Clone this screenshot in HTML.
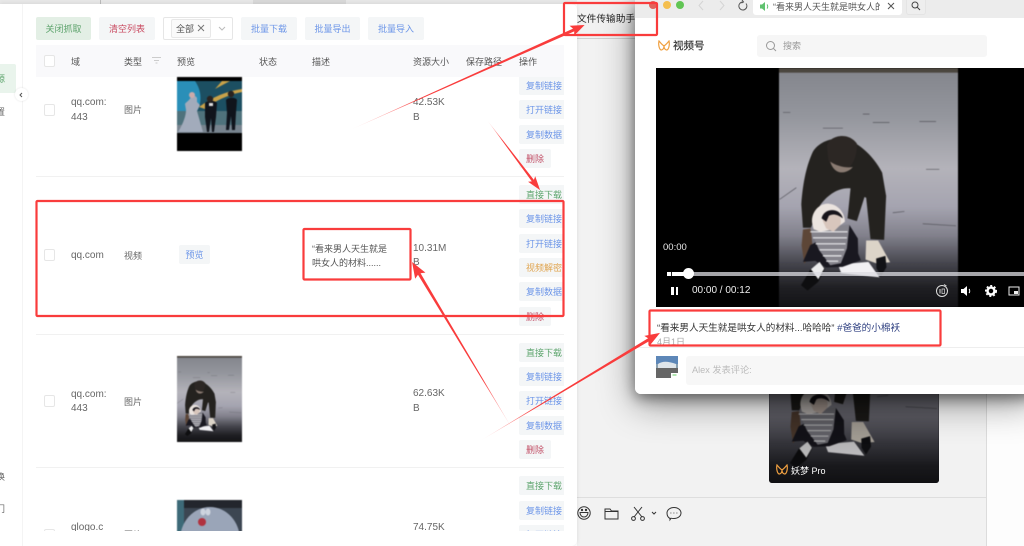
<!DOCTYPE html>
<html lang="zh"><head><meta charset="utf-8"><title>Screenshot</title>
<style>
*{box-sizing:border-box}
html,body{margin:0;padding:0;width:1024px;height:546px;overflow:hidden;background:#fff}
body{font-family:"Liberation Sans","Noto Sans CJK SC",sans-serif;font-size:9px;color:#666}
#root{position:relative;width:1024px;height:546px;overflow:hidden;filter:blur(.3px)}
.a{position:absolute}
.x{position:absolute;line-height:14px;white-space:nowrap;margin-top:1px}
.n{font-size:10px;color:#666}
.h{color:#555}
.tb{position:absolute;top:17px;height:23px;line-height:25px;text-align:center;border-radius:2px;background:#f4f6f7;color:#6d96e8;white-space:nowrap}
.b{position:absolute;left:519px;width:52px;height:19px;line-height:21px;padding-left:7px;background:#f4f6f7;border-radius:2px;white-space:nowrap;color:#6d96e8}
.g{color:#5ea56e}.r{color:#c25168;width:32px}.o{color:#e0a44e}
.c{position:absolute;left:44px;width:11px;height:12px;border:1px solid #e6e6e6;border-radius:2px;background:#fff}
.l{position:absolute;left:36px;width:528px;height:1px;background:#f1f1f1}
svg{display:block}
</style></head><body><div id="root">

<svg width="0" height="0" style="position:absolute">
<defs>
<linearGradient id="ice" x1="0" y1="0" x2="0" y2="1">
<stop offset="0" stop-color="#83858c"/><stop offset=".2" stop-color="#94969d"/><stop offset=".42" stop-color="#b4b3ba"/><stop offset=".58" stop-color="#a5a4b0"/><stop offset=".7" stop-color="#82818c"/><stop offset=".82" stop-color="#44444c"/><stop offset=".92" stop-color="#1f1f23"/><stop offset="1" stop-color="#131316"/>
</linearGradient>
<linearGradient id="fade" x1="0" y1="0" x2="1" y2="0">
<stop offset="0" stop-color="#f93c3c" stop-opacity="0"/><stop offset=".3" stop-color="#f93c3c"/><stop offset="1" stop-color="#f93c3c"/>
</linearGradient>
<symbol id="scene" viewBox="28 12 538 715" preserveAspectRatio="none">
<rect x="28" y="12" width="538" height="715" fill="url(#ice)"/>
<rect x="28" y="12" width="538" height="14" fill="#4b463f"/>
<path d="M40 145h22M280 150h20M310 175h50M450 172h50M160 192h60M370 445l35-4M460 478l100 6M470 315h40M30 405l50-35" stroke="#55555c" stroke-width="2" fill="none"/>
<path d="M95 420C100 350 112 300 130 262 145 238 175 222 215 222 260 228 310 270 338 325L350 395 344 526 303 524 290 400 285 398 262 470 234 462 243 372C205 368 170 395 150 425L124 490 100 490Z" fill="#24221f"/>
<path d="M172 245C178 215 235 200 262 238 264 275 248 310 225 320 200 322 182 305 176 285Z" fill="#2c2724"/>
<path d="M182 292C200 305 230 312 250 308 240 320 225 326 210 324 195 320 186 306 182 292Z" fill="#8a7b72"/>
<path d="M100 495l24-3 6 70-26 36-8-55Z" fill="#5d4637"/>
<path d="M290 528l36 0 36 65-40 4-34-12Z" fill="#dcd4c8"/>
<path d="M320 582l28-8 3 34-16 26-14-22Z" fill="#121216"/>
<path d="M205 600l92-8 33 46-115-12Z" fill="#f1f0f3"/>
<path d="M100 592l22-50 118-60 25 40 1 45 8 20-55 20-50 2-32-20Z" fill="#191820"/>
<path d="M122 494l118-14-8 72-18 44-32 6-34-46Z" fill="#85848c"/>
<path d="M122 502h112M130 520h102M138 538h90M150 556h74M160 574h56M170 590h36" stroke="#ececee" stroke-width="3.500" fill="none"/>
<path d="M128 478c-6-30 18-62 50-60 28 2 48 28 48 54l-30 22-44 8-20-8Z" fill="#ebe4df"/>
<path d="M160 470c0-24 14-34 30-30 20 4 28 24 22 42l-20 20-22-10Z" fill="#d8c6bc"/>
<path d="M156 462c6-32 56-34 64 0-18-14-32-14-42-8l-8 18Z" fill="#17141a"/>
<path d="M94 662l28-46 30-22 14 18-20 40-32 26Z" fill="#0e0e10"/>
<path d="M124 614l26-22 14 20-18 32Z" fill="#ececed"/>
</symbol>
<symbol id="logo" viewBox="0 0 12 11"><path d="M1 1C3 3.500 4.500 5 6 6 7.500 5 9 3.500 11 1 11.800 4 11 9 9 10 7 10.300 6 8 6 6 6 8 5 10.300 3 10 1 9 .2 4 1 1Z" fill="none" stroke="#f0a040" stroke-width="1.200"/></symbol>
</defs>
</svg>

<!-- background strip -->
<div class="a" style="left:0;top:0;width:1024px;height:4px;background:#e7e7e7"></div>
<div class="a" style="left:100px;top:0;width:1px;height:4px;background:#bbb"></div>
<div class="a" style="left:253px;top:0;width:93px;height:4px;background:#d8d8d8"></div>

<!-- right background / chat window -->
<div class="a" style="left:986px;top:0;width:38px;height:546px;background:#fdfdfd"></div>
<div class="a" style="left:577px;top:0;width:410px;height:546px;background:#f2f2f2;border-right:1px solid #dcdcdc"></div>
<div class="a" style="left:570px;top:38px;width:100px;height:1px;background:#d0d0d0"></div>
<div class="a" style="left:577px;top:497px;width:409px;height:1px;background:#dedede"></div>
<div class="x" style="left:577px;top:12px;font-size:9.700px;color:#222">文件传输助手</div>

<!-- thumbnail in chat -->
<div class="a" style="left:769px;top:380px;width:170px;height:103px;background:#17171a;border-radius:3px;overflow:hidden">
<svg class="a" style="left:0;top:-116px;filter:blur(.5px)" width="170" height="219"><use href="#scene" width="170" height="219"/></svg>
<div class="a" style="left:0;top:0;width:170px;height:103px;background:linear-gradient(rgba(0,0,0,.42),rgba(0,0,0,.15))"></div>
<svg class="a" style="left:7px;top:84px" width="12" height="11"><use href="#logo" width="12" height="11"/></svg>
<div class="x" style="left:22px;top:83px;color:#fff;font-size:9px">妖梦 Pro</div>
</div>

<!-- chat toolbar -->
<svg class="a" style="left:577px;top:503px" width="110" height="20" fill="none" stroke="#333" stroke-width="1">
<circle cx="7" cy="10" r="6.200"/><path d="M3 9.500h8c0 3-2 4.500-4 4.500S3 12.500 3 9.500Z"/><circle cx="5" cy="7" r=".7" fill="#333"/><circle cx="9" cy="7" r=".7" fill="#333"/>
<path d="M28 6h5l1.500 2H41v8H28ZM28 8.500h13"/>
<path d="M57 4l8 10M65 4l-8 10"/><circle cx="56.500" cy="15.500" r="1.900"/><circle cx="65.500" cy="15.500" r="1.900"/>
<path d="M75 9l2 2 2-2"/>
<path d="M93 15.500c-2-1-3-3-3-5.500 0-3 3-5.500 7-5.500s7 2.500 7 5.500-3 5.500-7 5.500c-1 0-2 0-3-.3l-1 1.500Z"/><path d="M93.500 10h.8M96.500 10h.8M99.500 10h.8"/>
</svg>

<!-- left panel -->
<div class="a" style="left:0;top:4px;width:577px;height:542px;background:#fff;border-radius:0 6px 6px 0;box-shadow:0 0 4px rgba(0,0,0,.1)"></div>
<div class="a" style="left:22px;top:4px;width:1px;height:542px;background:#f4f4f4"></div>
<div class="a" style="left:0;top:64px;width:16px;height:29px;background:#e9f4ec;border-radius:0 2px 2px 0"></div>
<div class="x" style="left:-4px;top:71px;color:#5ea56e">源</div>
<div class="x" style="left:-4px;top:104px;color:#666">置</div>
<div class="x" style="left:-4px;top:469px;color:#666">换</div>
<div class="x" style="left:-4px;top:501px;color:#666">门</div>
<div class="a" style="left:15px;top:88px;width:13px;height:13px;border-radius:50%;background:#fff;box-shadow:0 0 2px rgba(0,0,0,.12)"></div>
<svg class="a" style="left:18px;top:92px" width="6" height="6" fill="none" stroke="#555"><path d="M4 1L2 3l2 2"/></svg>

<div class="a" style="left:0;top:0;width:564px;height:531px;overflow:hidden">
<!-- row 1 buttons sit beneath the sticky header -->
<div class="b" style="top:76px">复制链接</div>
<div class="b" style="top:100px">打开链接</div>
<div class="b" style="top:125px">复制数据</div>
<div class="b r" style="top:149px">删除</div>

<!-- toolbar -->
<div class="tb" style="left:36px;width:55px;background:#e3efe5;color:#5da36c">关闭抓取</div>
<div class="tb" style="left:99px;width:56px;color:#c9485f">清空列表</div>
<div class="a" style="left:163px;top:17px;width:70px;height:23px;border:1px solid #e6e6e6;border-radius:2px"></div>
<div class="a" style="left:171px;top:19px;width:40px;height:19px;border:1px solid #e8e8e8;border-radius:2px;background:#fafafa;line-height:19px;padding-left:4px;color:#555">全部</div>
<svg class="a" style="left:197px;top:24px" width="8" height="8" stroke="#777" fill="none"><path d="M1 1l6 6M7 1L1 7"/></svg>
<svg class="a" style="left:218px;top:26px" width="8" height="5" stroke="#bbb" fill="none"><path d="M1 1l3 3 3-3"/></svg>
<div class="tb" style="left:241px;width:56px">批量下载</div>
<div class="tb" style="left:305px;width:55px">批量导出</div>
<div class="tb" style="left:368px;width:56px">批量导入</div>

<!-- header -->
<div class="a" style="left:36px;top:45px;width:528px;height:32px;background:#f9f9fb"></div>
<div class="c" style="top:55px"></div>
<div class="x h" style="left:71px;top:54px">域</div>
<div class="x h" style="left:124px;top:54px">类型</div>
<svg class="a" style="left:152px;top:57px" width="9" height="7" fill="none" stroke="#ccc"><path d="M0 .5h9M2 3.500h5M3.500 6h2"/></svg>
<div class="x h" style="left:177px;top:54px">预览</div>
<div class="x h" style="left:259px;top:54px">状态</div>
<div class="x h" style="left:312px;top:54px">描述</div>
<div class="x h" style="left:413px;top:54px">资源大小</div>
<div class="x h" style="left:466px;top:54px">保存路径</div>
<div class="x h" style="left:519px;top:54px">操作</div>

<!-- row 1 -->
<div class="c" style="top:104px"></div>
<div class="x n" style="left:71px;top:95px">qq.com:</div><div class="x n" style="left:71px;top:110px">443</div>
<div class="x" style="left:124px;top:102px">图片</div>
<svg class="a" style="left:177px;top:77px;filter:blur(.4px)" width="65" height="74" viewBox="0 0 65 74">
<rect width="65" height="74" fill="#000"/>
<rect y="4" width="65" height="36" fill="#2a8fb8"/>
<path d="M18 4c7 10 7 22 2 30H65V4Z" fill="#1c4f62"/>
<path d="M22 30C35 20 50 14 65 12v3C50 18 38 24 28 32ZM38 12l15-8h-8Z" fill="#c8a24a"/>
<rect y="34" width="65" height="22" fill="#4f727c"/>
<rect y="48" width="65" height="8" fill="#77838e"/>
<path d="M14 20c3-2 5-1 6 1l0 4 3 3-3 6 6 21H1c5-8 8-16 8-22l-1-6c1-2 4-3 6-7Z" fill="#a2abbb"/>
<circle cx="15" cy="18" r="3" fill="#caa"/>
<path d="M28 26c2-3 10-3 12 0l-1 14-2 15h-2l-1-14-2 14h-2l-2-15Z" fill="#10141c"/>
<circle cx="33" cy="22" r="3.200" fill="#2a2320"/>
<rect x="32" y="26" width="4" height="3" fill="#ddd"/>
<path d="M49 23c2-3 10-3 11 0l-1 13-1 17h-3l-1-14-2 14h-3l1-17Z" fill="#10141c"/>
<circle cx="54" cy="17" r="3.200" fill="#2a2320"/>
</svg>
<div class="x n" style="left:413px;top:95px">42.53K</div><div class="x n" style="left:413px;top:110px">B</div>
<div class="l" style="top:176px"></div>

<!-- row 2 -->
<div class="c" style="top:249px"></div>
<div class="x n" style="left:71px;top:248px">qq.com</div>
<div class="x" style="left:124px;top:248px">视频</div>
<div class="a" style="left:179px;top:245px;width:31px;height:19px;line-height:21px;text-align:center;background:#f4f6f7;border-radius:2px;color:#6d96e8">预览</div>
<div class="x" style="left:312px;top:241px;color:#555">“看来男人天生就是</div>
<div class="x" style="left:312px;top:255px;color:#555">哄女人的材料......</div>
<div class="x n" style="left:413px;top:241px">10.31M</div><div class="x n" style="left:413px;top:255px">B</div>
<div class="b g" style="top:185px">直接下载</div>
<div class="b" style="top:209px">复制链接</div>
<div class="b" style="top:234px">打开链接</div>
<div class="b o" style="top:258px">视频解密</div>
<div class="b" style="top:282px">复制数据</div>
<div class="b r" style="top:307px">删除</div>
<div class="l" style="top:334px"></div>

<!-- row 3 -->
<div class="c" style="top:395px"></div>
<div class="x n" style="left:71px;top:387px">qq.com:</div><div class="x n" style="left:71px;top:401px">443</div>
<div class="x" style="left:124px;top:394px">图片</div>
<svg class="a" style="left:177px;top:356px;filter:blur(.4px)" width="65" height="86"><use href="#scene" width="65" height="86"/></svg>
<div class="x n" style="left:413px;top:386px">62.63K</div><div class="x n" style="left:413px;top:401px">B</div>
<div class="b g" style="top:343px">直接下载</div>
<div class="b" style="top:367px">复制链接</div>
<div class="b" style="top:391px">打开链接</div>
<div class="b" style="top:416px">复制数据</div>
<div class="b r" style="top:440px">删除</div>
<div class="l" style="top:467px"></div>

<!-- row 4 -->
<div class="c" style="top:529px"></div>
<div class="x n" style="left:71px;top:520px">qlogo.c</div>
<div class="x" style="left:124px;top:527px">图片</div>
<svg class="a" style="left:177px;top:500px;filter:blur(.6px)" width="65" height="32" viewBox="0 0 65 32">
<rect width="65" height="32" fill="#3c4652"/>
<rect width="65" height="8" fill="#23262d"/>
<rect width="7" height="32" fill="#3d6a78"/>
<ellipse cx="33" cy="40" rx="30" ry="33" fill="#9aa5b8"/>
<circle cx="25" cy="22" r="4" fill="#b0323f"/>
<ellipse cx="26" cy="12" rx="2.500" ry="3.500" fill="#cdd3de"/><ellipse cx="31" cy="12" rx="2.500" ry="3.500" fill="#cdd3de"/>
</svg>
<div class="x n" style="left:413px;top:520px">74.75K</div>
<div class="b g" style="top:476px">直接下载</div>
<div class="b" style="top:501px">复制链接</div>
<div class="b" style="top:525px">打开链接</div>
</div>

<!-- browser window -->
<div class="a" style="left:635px;top:0;width:400px;height:394px;background:#fff;border-radius:0 0 0 6px;box-shadow:0 4px 14px rgba(0,0,0,.45),0 10px 36px rgba(0,0,0,.42);overflow:hidden">
<div class="a" style="left:0;top:0;width:400px;height:18px;background:#ececec"></div>
<div class="a" style="left:14px;top:1px;width:8px;height:8px;border-radius:50%;background:#e0645c"></div>
<div class="a" style="left:28px;top:1px;width:8px;height:8px;border-radius:50%;background:#f4bf4f"></div>
<div class="a" style="left:41px;top:1px;width:8px;height:8px;border-radius:50%;background:#61c554"></div>
<div class="a" style="left:118px;top:0;width:149px;height:15px;background:#fff;border-radius:0 0 3px 3px"></div>
<svg class="a" style="left:124px;top:1px" width="14" height="11" viewBox="0 0 14 11"><path d="M1 3.500h2L6 1v9L3 7.500H1Z" fill="#5fc26f"/><path d="M8 3.500c1 1 1 3 0 4" stroke="#5fc26f" fill="none"/></svg>
<div class="x" style="left:138px;top:-1px;width:107px;overflow:hidden;color:#555;font-size:9px">“看来男人天生就是哄女人的材料</div>
<svg class="a" style="left:252px;top:2px" width="8" height="8" stroke="#555" fill="none"><path d="M1 1l6 6M7 1L1 7"/></svg>
<div class="a" style="left:271px;top:0;width:20px;height:15px;background:#eee;border-radius:0 0 3px 3px;border:1px solid #e4e4e4;border-top:0"></div>
<svg class="a" style="left:276px;top:1px" width="10" height="10" stroke="#444" fill="none"><circle cx="4" cy="4" r="3"/><path d="M6 6l3 3"/></svg>
<svg class="a" style="left:60px;top:0" width="60" height="12" fill="none"><path d="M8 1L4 5.500 8 10" stroke="#d4d4d4"/><path d="M25 1l4 4.500-4 4.500" stroke="#d4d4d4"/><path d="M48 2a4 4 0 1 0 3 1.500M47 0l1.500 2L46.500 3" stroke="#555"/></svg>

<svg class="a" style="left:23px;top:40px" width="12" height="11"><use href="#logo" width="12" height="11"/></svg>
<div class="x" style="left:38px;top:38px;font-size:10.500px;color:#333;-webkit-text-stroke:.2px #333">视频号</div>
<div class="a" style="left:122px;top:35px;width:230px;height:22px;background:#f6f6f6;border-radius:3px"></div>
<svg class="a" style="left:130px;top:40px" width="12" height="12" fill="none" stroke="#999"><circle cx="5.500" cy="5.500" r="4"/><path d="M8.500 8.500l2.500 2.500"/></svg>
<div class="x" style="left:148px;top:38px;color:#999">搜索</div>

<!-- video -->
<div class="a" style="left:21px;top:68px;width:370px;height:239px;background:#000;overflow:hidden">
<svg class="a" style="left:123px;top:0;filter:blur(.6px)" width="179" height="239"><use href="#scene" width="179" height="239"/></svg>
<div class="x" style="left:7px;top:172px;color:#e8e8e8;font-size:9.500px">00:00</div>
<div class="a" style="left:11px;top:204px;width:359px;height:4px;background:rgba(220,220,225,.75)"></div>
<div class="a" style="left:11px;top:204px;width:22px;height:4px;background:#fff"></div>
<div class="a" style="left:15px;top:204px;width:1px;height:4px;background:#222"></div>
<div class="a" style="left:27px;top:200px;width:11px;height:11px;border-radius:50%;background:#fff"></div>
<div class="a" style="left:15px;top:219px;width:2.500px;height:8px;background:#fff"></div>
<div class="a" style="left:19.500px;top:219px;width:2.500px;height:8px;background:#fff"></div>
<div class="x" style="left:36px;top:215px;color:#eee;font-size:10px">00:00 / 00:12</div>
<svg class="a" style="left:278px;top:214px" width="92" height="18" fill="none">
<circle cx="8" cy="9" r="5.500" stroke="#ddd"/><path d="M6 7v4.500" stroke="#ddd"/><path d="M8 7h2.500v4.500H8Z" stroke="#ddd" stroke-width=".7"/><path d="M10 2.500l2.500 1.500" stroke="#ddd"/>
<path d="M27 7h2.500l3.500-3v10l-3.500-3H27Z" fill="#fff"/><path d="M35 7c1 1 1 3 0 4" stroke="#fff"/>
<circle cx="57" cy="9" r="3.500" stroke="#fff" stroke-width="2.500"/><circle cx="57" cy="9" r="5.300" stroke="#fff" stroke-width="1.400" stroke-dasharray="2 2"/>
<path d="M75 5h10v8H75Z" stroke="#eee"/><rect x="80" y="9" width="4" height="3" fill="#eee"/>
</svg>
</div>

<div class="x" style="left:22px;top:321px;color:#333;font-size:9.600px">“看来男人天生就是哄女人的材料...哈哈哈” <span style="color:#2e3f80">#爸爸的小棉袄</span></div>
<div class="x" style="left:22px;top:334px;color:#aaa;font-size:9px">4月1日</div>
<div class="a" style="left:0;top:347px;width:400px;height:47px;background:#fff;border-top:1px solid #eee"></div>
<svg class="a" style="left:21px;top:356px" width="22" height="22" viewBox="0 0 22 22"><rect width="22" height="22" rx="2" fill="#8aa0b0"/><rect width="22" height="8" fill="#5d87b8"/><path d="M2 8c4-3 10-3 18 0v4H2Z" fill="#dfe5ea"/><rect y="12" width="22" height="10" fill="#666"/><rect x="15" y="17" width="7" height="5" fill="#fff"/><path d="M16.500 19h4" stroke="#6c6"/></svg>
<div class="a" style="left:51px;top:356px;width:349px;height:29px;background:#f7f7f7;border-radius:3px"></div>
<div class="x" style="left:57px;top:362px;color:#bbb;font-size:9.200px">Alex 发表评论:</div>
</div>

<!-- annotations -->
<svg class="a" style="left:0;top:0" width="1024" height="546" fill="none" stroke="#f93c3c" stroke-width="2.200" stroke-linejoin="round">
<rect x="564" y="3" width="93" height="32" rx="1"/>
<rect x="36.500" y="201" width="527" height="115" rx="1"/>
<rect x="303.500" y="229" width="107" height="50.500" rx="1"/>
<rect x="649.500" y="310.500" width="291" height="35" rx="1"/>
<g fill="url(#fade)" stroke="none">
<polygon transform="translate(350,130) rotate(-24.100)" points="0,0 245,-1.500 243,-5.500 257,0 243,5.500 245,1.500"/>
<polygon transform="translate(487,120) rotate(52.900)" points="0,0 76,-1.300 74,-4.500 88,0 74,4.500 76,1.300"/>
<polygon transform="translate(513,430) rotate(-121)" points="0,0 182,-1.500 180,-6 196,0 180,6 182,1.500"/>
<polygon transform="translate(480,441) rotate(-31)" points="0,0 197,-1.500 195,-5.500 210,0 195,5.500 197,1.500"/>
</g>
</svg>
</div></body></html>
